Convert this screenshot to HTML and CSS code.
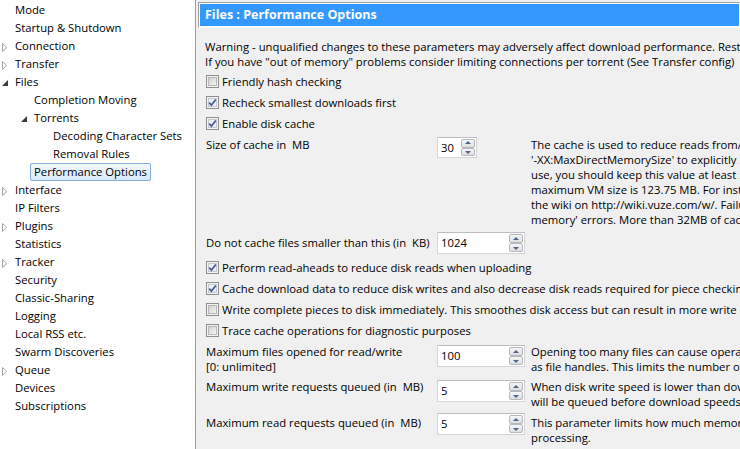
FILE: index.html
```html
<!DOCTYPE html>
<html>
<head>
<meta charset="utf-8">
<link rel="stylesheet" href="styles.css">
</head>
<body>
<svg class="defs" width="0" height="0">
  <defs>
    <linearGradient id="cbg" x1="0" y1="0" x2="1" y2="1">
      <stop offset="0" stop-color="#cfcfcf"/>
      <stop offset="1" stop-color="#f7f7f7"/>
    </linearGradient>
    <symbol id="box" viewBox="0 0 13 13">
      <rect x="0.5" y="0.5" width="12" height="12" fill="#f4f4f4" stroke="#8f8f8f"/>
      <rect x="2.5" y="2.5" width="8" height="8" fill="url(#cbg)" stroke="#b8b8b8"/>
    </symbol>
    <symbol id="boxchk" viewBox="0 0 13 13">
      <rect x="0.5" y="0.5" width="12" height="12" fill="#f4f4f4" stroke="#8f8f8f"/>
      <rect x="2.5" y="2.5" width="8" height="8" fill="#eef0f4" stroke="#c4c8d0"/>
      <path d="M3.3 6.6 L5.4 9.2 L9.8 3.4" fill="none" stroke="#41579a" stroke-width="1.7"/>
    </symbol>
    <symbol id="closed" viewBox="0 0 6 9">
      <path d="M0.5 0.5 L4.8 4.5 L0.5 8.5 Z" fill="#fff" stroke="#a6a6a6"/>
    </symbol>
    <symbol id="open" viewBox="0 0 6 6">
      <path d="M6 0 L6 6 L0 6 Z" fill="#3c3c3c"/>
    </symbol>
  </defs>
</svg>
<div class="app">
  <div class="tree">
    <div class="row"><span class="exp"></span><span class="lbl">Mode</span></div>
    <div class="row"><span class="exp"></span><span class="lbl">Startup &amp; Shutdown</span></div>
    <div class="row"><span class="exp"><svg class="tri-c"><use href="#closed"/></svg></span><span class="lbl">Connection</span></div>
    <div class="row"><span class="exp"><svg class="tri-c"><use href="#closed"/></svg></span><span class="lbl">Transfer</span></div>
    <div class="row"><span class="exp"><svg class="tri-o"><use href="#open"/></svg></span><span class="lbl">Files</span></div>
    <div class="row l1"><span class="exp"></span><span class="lbl">Completion Moving</span></div>
    <div class="row l1"><span class="exp"><svg class="tri-o"><use href="#open"/></svg></span><span class="lbl">Torrents</span></div>
    <div class="row l2"><span class="exp"></span><span class="lbl">Decoding Character Sets</span></div>
    <div class="row l2"><span class="exp"></span><span class="lbl">Removal Rules</span></div>
    <div class="row l1"><span class="exp"></span><span class="lbl sel">Performance Options</span></div>
    <div class="row"><span class="exp"><svg class="tri-c"><use href="#closed"/></svg></span><span class="lbl">Interface</span></div>
    <div class="row"><span class="exp"></span><span class="lbl">IP Filters</span></div>
    <div class="row"><span class="exp"><svg class="tri-c"><use href="#closed"/></svg></span><span class="lbl">Plugins</span></div>
    <div class="row"><span class="exp"></span><span class="lbl">Statistics</span></div>
    <div class="row"><span class="exp"><svg class="tri-c"><use href="#closed"/></svg></span><span class="lbl">Tracker</span></div>
    <div class="row"><span class="exp"></span><span class="lbl">Security</span></div>
    <div class="row"><span class="exp"></span><span class="lbl">Classic-Sharing</span></div>
    <div class="row"><span class="exp"></span><span class="lbl">Logging</span></div>
    <div class="row"><span class="exp"></span><span class="lbl">Local RSS etc.</span></div>
    <div class="row"><span class="exp"></span><span class="lbl">Swarm Discoveries</span></div>
    <div class="row"><span class="exp"><svg class="tri-c"><use href="#closed"/></svg></span><span class="lbl">Queue</span></div>
    <div class="row"><span class="exp"></span><span class="lbl">Devices</span></div>
    <div class="row"><span class="exp"></span><span class="lbl">Subscriptions</span></div>
  </div>

  <div class="main">
    <div class="header"><div class="title">Files : Performance Options</div></div>
    <div class="content">
      <p class="warn">Warning - unqualified changes to these parameters may adversely affect download performance. Restart Vuze for changes to take effect.<br>If you have "out of memory" problems consider limiting connections per torrent (See Transfer config)</p>

      <div class="cbs first">
        <div class="cb"><svg class="box"><use href="#box"/></svg><span>Friendly hash checking</span></div>
        <div class="cb"><svg class="box"><use href="#boxchk"/></svg><span>Recheck smallest downloads first</span></div>
        <div class="cb"><svg class="box"><use href="#boxchk"/></svg><span>Enable disk cache</span></div>
      </div>

      <div class="prow r-cache">
        <div class="plabel">Size of cache in&nbsp; MB</div>
        <div class="spin narrow"><span class="val">30</span><span class="btns"><span class="btn up"></span><span class="btn dn"></span></span></div>
        <div class="desc">The cache is used to reduce reads from/writes to disk. Use the JVM parameter<br>'-XX:MaxDirectMemorySize' to explicitly set the memory available for direct<br>use, you should keep this value at least 32MB below that value. Your current<br>maximum VM size is 123.75 MB. For instructions on changing this, please see<br>the wiki on http://wiki.vuze.com/w/. Failure to do so may result in 'out of<br>memory' errors. More than 32MB of cache is unlikely to be beneficial.</div>
      </div>

      <div class="prow r-nocache">
        <div class="plabel">Do not cache files smaller than this (in&nbsp; KB)</div>
        <div class="spin wide"><span class="val">1024</span><span class="btns"><span class="btn up"></span><span class="btn dn"></span></span></div>
        <div class="desc"></div>
      </div>

      <div class="cbs second">
        <div class="cb"><svg class="box"><use href="#boxchk"/></svg><span>Perform read-aheads to reduce disk reads when uploading</span></div>
        <div class="cb"><svg class="box"><use href="#boxchk"/></svg><span>Cache download data to reduce disk writes and also decrease disk reads required for piece checking</span></div>
        <div class="cb"><svg class="box"><use href="#box"/></svg><span>Write complete pieces to disk immediately. This smoothes disk access but can result in more write operations</span></div>
        <div class="cb"><svg class="box"><use href="#box"/></svg><span>Trace cache operations for diagnostic purposes</span></div>
      </div>

      <div class="prow r-files">
        <div class="plabel">Maximum files opened for read/write<br>[0: unlimited]</div>
        <div class="spin wide"><span class="val">100</span><span class="btns"><span class="btn up"></span><span class="btn dn"></span></span></div>
        <div class="desc">Opening too many files can cause operating system resource problems such<br>as file handles. This limits the number of files that can be open at once.</div>
      </div>

      <div class="prow r-write">
        <div class="plabel">Maximum write requests queued (in&nbsp; MB)</div>
        <div class="spin wide"><span class="val">5</span><span class="btns"><span class="btn up"></span><span class="btn dn"></span></span></div>
        <div class="desc">When disk write speed is lower than download speed this limits how much data<br>will be queued before download speeds are reduced.</div>
      </div>

      <div class="prow r-read">
        <div class="plabel">Maximum read requests queued (in&nbsp; MB)</div>
        <div class="spin wide"><span class="val">5</span><span class="btns"><span class="btn up"></span><span class="btn dn"></span></span></div>
        <div class="desc">This parameter limits how much memory is used for queued read requests before<br>processing.</div>
      </div>
    </div>
  </div>
</div>
</body>
</html>
```

FILE: styles.css
```css
* { box-sizing: border-box; }

html, body {
  margin: 0;
  padding: 0;
  width: 740px;
  height: 449px;
  overflow: hidden;
  background: #f0f0f0;
  font-family: "Open Sans", "Liberation Sans", sans-serif;
  font-size: 11.3px;
  color: #000;
}

.defs { position: absolute; width: 0; height: 0; }

.app {
  display: flex;
  width: 740px;
  height: 449px;
}

/* ---------- tree ---------- */
.tree {
  width: 196px;
  flex: none;
  background: #fff;
  border-right: 1px solid #9d9d9d;
  padding-top: 1px;
}

.row {
  display: flex;
  align-items: center;
  height: 18px;
  white-space: nowrap;
}
.row.l1 { padding-left: 19px; }
.row.l2 { padding-left: 38px; }

.exp {
  width: 11px;
  height: 18px;
  flex: none;
  display: flex;
  align-items: center;
  padding-left: 2px;
}
.tri-c { width: 6px; height: 9px; margin-top: 2px; }
.tri-o { width: 6px; height: 6px; margin-top: 1px; }

.lbl {
  padding: 0 3px;
  border: 1px solid transparent;
  line-height: 16px;
}
.lbl.sel {
  border-color: #84acdd;
  border-radius: 2px;
  background: linear-gradient(#f2f8fe, #d8e9fb);
}

/* ---------- main ---------- */
.main {
  flex: 1;
  min-width: 0;
  overflow: hidden;
  background: #f0f0f0;
}

.header {
  margin: 2px 0 0 2px;
  border: 1px solid;
  border-color: #a0a0a0 #fff #fff #a0a0a0;
  background: #fff;
  padding: 1px 0 1px 1px;
}
.title {
  background: #3399ff;
  color: #fff;
  height: 22px;
  line-height: 22px;
  padding-left: 5px;
  font-weight: bold;
  font-size: 12.5px;
  white-space: nowrap;
}

.content {
  padding-left: 9px;
  white-space: nowrap;
}

.warn {
  margin: 11px 0 0 0;
  line-height: 15px;
}

.cbs { display: flex; flex-direction: column; }
.cbs.first { margin-top: 2px; }
.cbs.second { margin-top: 3px; }

.cb {
  height: 21px;
  display: flex;
  align-items: center;
}
.box {
  width: 13px;
  height: 13px;
  flex: none;
  margin: 0 3px 0 1px;
}

/* ---------- parameter rows ---------- */
.prow {
  display: grid;
  grid-template-columns: 232px 94px auto;
  align-items: start;
  line-height: 15px;
}
.plabel { padding-left: 1px; }

.r-cache { margin-top: 2px; }
.r-cache .plabel { padding-top: 1px; }
.r-cache .spin { margin-top: 1px; }
.r-cache .desc { padding-top: 1px; }

.r-nocache { margin-top: 5px; }
.r-nocache .plabel { padding-top: 3px; }

.r-files { margin-top: 3px; }
.r-files .spin { margin-top: 1px; }

.r-write { margin-top: 5px; }
.r-write .spin { margin-top: 1px; }

.r-read { margin-top: 4px; }
.r-read .plabel, .r-read .desc { padding-top: 2px; }

.spin {
  display: flex;
  align-items: stretch;
  background: #fff;
  border: 1px solid #d5d5d5;
  border-top-color: #bdbdbd;
  padding: 1px 1px 1px 3px;
}
.spin.narrow { width: 40px; height: 21px; }
.spin.wide { width: 88px; height: 22px; }

.val {
  flex: 1;
  line-height: 17px;
}

.btns {
  width: 14px;
  display: flex;
  flex-direction: column;
}
.btn {
  flex: 1;
  border: 1px solid #b5b8bf;
  border-radius: 2px;
  background: linear-gradient(#f5f5f5, #dedede);
  position: relative;
}
.btn::after {
  content: "";
  position: absolute;
  left: 50%;
  top: 50%;
  width: 0;
  height: 0;
  margin-left: -3px;
  border-left: 3px solid transparent;
  border-right: 3px solid transparent;
}
.btn.up::after {
  margin-top: -2px;
  border-bottom: 3px solid #4e6591;
}
.btn.dn::after {
  margin-top: -1px;
  border-top: 3px solid #4e6591;
}

.desc { line-height: 15px; }
```
